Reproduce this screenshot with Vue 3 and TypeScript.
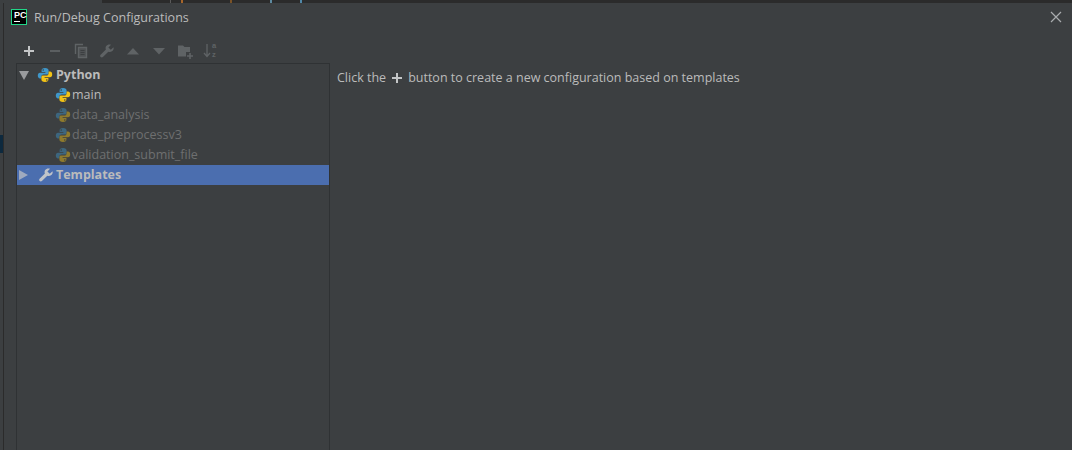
<script setup lang="ts">
interface ConfigRow {
  name: string
  muted: boolean
}

const configs: ConfigRow[] = [
  { name: 'main', muted: false },
  { name: 'data_analysis', muted: true },
  { name: 'data_preprocessv3', muted: true },
  { name: 'validation_submit_file', muted: true },
]

// bits of the editor window that peek out above the dialog
const peek = [
  { w: 102, c: '#3c3f41' },
  { w: 68, c: '#2b2b2b' },
  { w: 1, c: '#5a5a5a' },
  { w: 10, c: '#2b2b2b' },
  { w: 2, c: '#a8662a' },
  { w: 47, c: '#2b2b2b' },
  { w: 2, c: '#7a5226' },
  { w: 38, c: '#2b2b2b' },
  { w: 2, c: '#5d8aa0' },
  { w: 28, c: '#2b2b2b' },
  { w: 2, c: '#5088a8' },
  { w: 770, c: '#2b2b2b' },
]
</script>

<template>
  <div class="screen">
    <div class="peek">
      <span v-for="(p, i) in peek" :key="i" :style="{ width: p.w + 'px', background: p.c }" />
    </div>
    <div class="main">
      <div class="behind">
        <div class="behind-mark" />
      </div>
      <div class="dialog">
        <div class="titlebar">
          <div class="logo">
            <span class="logo-text">PC</span>
            <span class="logo-bar" />
          </div>
          <span class="title">Run/Debug Configurations</span>
          <svg class="close" width="12" height="12" viewBox="0 0 12 12">
            <path d="M1 1L11 11M11 1L1 11" stroke="#a9acae" stroke-width="1.2" fill="none" />
          </svg>
        </div>

        <div class="toolbar">
          <svg width="16" height="16" viewBox="0 0 16 16">
            <path d="M3 8H13M8 3V13" stroke="#c4c6c7" stroke-width="2" fill="none" />
          </svg>
          <svg width="16" height="16" viewBox="0 0 16 16">
            <path d="M3 8H13" stroke="#5b5f61" stroke-width="2" fill="none" />
          </svg>
          <svg width="16" height="16" viewBox="0 0 16 16" fill="none" stroke="#5f6365" stroke-width="1.4">
            <path d="M2.5 11V1.5H10" />
            <path d="M5.5 4.5H13.5V14.5H5.5Z" fill="#5f6365" fill-opacity=".55" />
            <path d="M7.5 7.5H11.5M7.5 9.5H11.5M7.5 11.5H11.5" stroke="#3c3f41" stroke-width="1" />
          </svg>
          <svg width="16" height="16" viewBox="0 0 16 16">
            <path
              d="M14.5 4.2L11.8 6.8L9.4 4.4L12 1.7C10.2 1 8.2 1.5 7.2 3C6.5 4.1 6.4 5.4 6.9 6.5L1.6 11.8C1 12.4 1 13.4 1.6 14.1C2.3 14.7 3.3 14.7 3.9 14.1L9.3 8.8C10.5 9.3 11.9 9.1 13 8.3C14.4 7.2 15 5.8 14.5 4.2Z"
              fill="#5f6365"
            />
          </svg>
          <svg width="16" height="16" viewBox="0 0 16 16">
            <path d="M2 11.5L8 5L14 11.5Z" fill="#5f6365" />
          </svg>
          <svg width="16" height="16" viewBox="0 0 16 16">
            <path d="M2 5L14 5L8 11.5Z" fill="#5f6365" />
          </svg>
          <svg width="16" height="16" viewBox="0 0 16 16">
            <path d="M1 2.5H6L7.5 4H13V9H9V13.5H1Z" fill="#5f6365" />
            <path d="M10 13H16M13 10V16" stroke="#5f6365" stroke-width="1.6" fill="none" />
          </svg>
          <div class="sort">
            <svg width="8" height="15" viewBox="0 0 8 15">
              <path d="M4 1V13M1 10L4 13.5L7 10" stroke="#5f6365" stroke-width="1.3" fill="none" />
            </svg>
            <span class="sort-az">a<br />z</span>
          </div>
        </div>

        <div class="body">
          <div class="tree">
            <div class="row">
              <span class="arrow-down" />
              <svg class="py" width="16" height="16" viewBox="0 0 16 16">
                <path d="M8 1C5.5 1 4.6 2 4.6 3.4V5H8.4V5.7H3C1.6 5.7 .8 6.8 .8 8.5C.8 10.2 1.6 11.4 3 11.4H4.4V9.6C4.4 8.4 5.4 7.5 6.6 7.5H10C11 7.5 11.6 6.8 11.6 5.9V3.4C11.6 2 10.5 1 8 1Z" fill="#3f97c9" />
                <path d="M8 15C10.5 15 11.4 14 11.4 12.6V11H7.6V10.3H13C14.4 10.3 15.2 9.2 15.2 7.5C15.2 5.8 14.4 4.6 13 4.6H11.6V6.4C11.6 7.6 10.6 8.5 9.4 8.5H6C5 8.5 4.4 9.2 4.4 10.1V12.6C4.4 14 5.5 15 8 15Z" fill="#f2c316" />
                <circle cx="6.2" cy="3" r=".8" fill="#3c3f41" />
                <circle cx="9.8" cy="13" r=".8" fill="#3c3f41" />
              </svg>
              <span class="label strong">Python</span>
            </div>
            <div v-for="c in configs" :key="c.name" class="row child" :class="{ muted: c.muted }">
              <svg class="py" width="16" height="16" viewBox="0 0 16 16">
                <path d="M8 1C5.5 1 4.6 2 4.6 3.4V5H8.4V5.7H3C1.6 5.7 .8 6.8 .8 8.5C.8 10.2 1.6 11.4 3 11.4H4.4V9.6C4.4 8.4 5.4 7.5 6.6 7.5H10C11 7.5 11.6 6.8 11.6 5.9V3.4C11.6 2 10.5 1 8 1Z" fill="#3f97c9" />
                <path d="M8 15C10.5 15 11.4 14 11.4 12.6V11H7.6V10.3H13C14.4 10.3 15.2 9.2 15.2 7.5C15.2 5.8 14.4 4.6 13 4.6H11.6V6.4C11.6 7.6 10.6 8.5 9.4 8.5H6C5 8.5 4.4 9.2 4.4 10.1V12.6C4.4 14 5.5 15 8 15Z" fill="#f2c316" />
                <circle cx="6.2" cy="3" r=".8" fill="#3c3f41" />
                <circle cx="9.8" cy="13" r=".8" fill="#3c3f41" />
              </svg>
              <span class="label">{{ c.name }}</span>
            </div>
            <div class="row selected">
              <span class="arrow-right" />
              <svg class="py" width="16" height="16" viewBox="0 0 16 16">
                <path
                  d="M14.5 4.2L11.8 6.8L9.4 4.4L12 1.7C10.2 1 8.2 1.5 7.2 3C6.5 4.1 6.4 5.4 6.9 6.5L1.6 11.8C1 12.4 1 13.4 1.6 14.1C2.3 14.7 3.3 14.7 3.9 14.1L9.3 8.8C10.5 9.3 11.9 9.1 13 8.3C14.4 7.2 15 5.8 14.5 4.2Z"
                  fill="#c0c4c9"
                />
              </svg>
              <span class="label strong">Templates</span>
            </div>
          </div>

          <div class="hint">
            <span>Click the</span>
            <svg width="12" height="12" viewBox="0 0 12 12">
              <path d="M1 6H11M6 1V11" stroke="#c4c6c7" stroke-width="2" fill="none" />
            </svg>
            <span>button to create a new configuration based on templates</span>
          </div>
        </div>
      </div>
    </div>
  </div>
</template>

<style>
html,
body {
  margin: 0;
  background: #3c3f41;
}
</style>

<style scoped>
.screen {
  width: 1072px;
  height: 450px;
  display: flex;
  flex-direction: column;
  overflow: hidden;
  background: #3c3f41;
  font-family: "Open Sans", "Noto Sans", sans-serif;
  font-size: 12.5px;
  color: #bbbbbb;
}
.peek {
  height: 3px;
  flex: none;
  display: flex;
}
.peek span {
  flex: none;
}
.main {
  flex: 1;
  min-height: 0;
  display: flex;
}
.behind {
  width: 4px;
  flex: none;
  padding-top: 132px;
  background: #3c3f41;
  border-right: 1px solid #2b2b2b;
  box-sizing: border-box;
}
.behind-mark {
  height: 18px;
  background: #0d293e;
}
.dialog {
  flex: 1;
  min-width: 0;
  display: flex;
  flex-direction: column;
  background: #3c3f41;
}
.titlebar {
  height: 28px;
  flex: none;
  display: flex;
  align-items: center;
  padding: 0 10px 0 7px;
}
.logo {
  flex: none;
  background: #000;
  border: 1px solid #21d789;
  display: flex;
  flex-direction: column;
  padding: 1px 1px 0 2px;
  width: 11px;
  height: 13px;
  margin-right: 7px;
}
.logo-text {
  font: bold 9px/8px "Liberation Sans", sans-serif;
  color: #fff;
}
.logo-bar {
  width: 6px;
  height: 1px;
  margin-top: 2px;
  background: #fff;
}
.title {
  flex: 1;
}
.toolbar {
  height: 32px;
  flex: none;
  display: flex;
  align-items: center;
  gap: 10px;
  padding: 7px 0 0 17px;
  box-sizing: border-box;
}
.sort {
  display: flex;
  align-items: center;
  gap: 1px;
}
.sort-az {
  font: bold 7.5px/8.7px "Liberation Sans", sans-serif;
  color: #5f6365;
}
.body {
  flex: 1;
  min-height: 0;
  display: flex;
  padding-left: 12px;
}
.tree {
  width: 314px;
  flex: none;
  box-sizing: border-box;
  padding-top: 1px;
  border: 1px solid #2f3234;
  border-bottom: 0;
}
.row {
  height: 20px;
  display: flex;
  align-items: center;
  box-sizing: border-box;
  padding-left: 2px;
}
.row.child {
  padding-left: 38px;
}
.row.selected {
  background: #4b6eaf;
}
.arrow-down {
  width: 0;
  height: 0;
  border-left: 5px solid transparent;
  border-right: 5px solid transparent;
  border-top: 9px solid #9a9c9e;
  margin-right: 8px;
}
.arrow-right {
  width: 0;
  height: 0;
  border-top: 5px solid transparent;
  border-bottom: 5px solid transparent;
  border-left: 9px solid #9faabf;
  margin-right: 10px;
}
.py {
  flex: none;
}
.label {
  margin-left: 1px;
  padding-bottom: 2px;
}
.strong {
  margin-left: 2px;
  font-weight: 700;
}
.row:first-child .strong {
  margin-left: 3px;
}
.muted .label {
  color: #6e6f70;
}
.muted .py {
  opacity: 0.45;
}
.hint {
  display: flex;
  align-items: center;
  gap: 5px;
  height: 29px;
  padding-left: 7px;
}
</style>
